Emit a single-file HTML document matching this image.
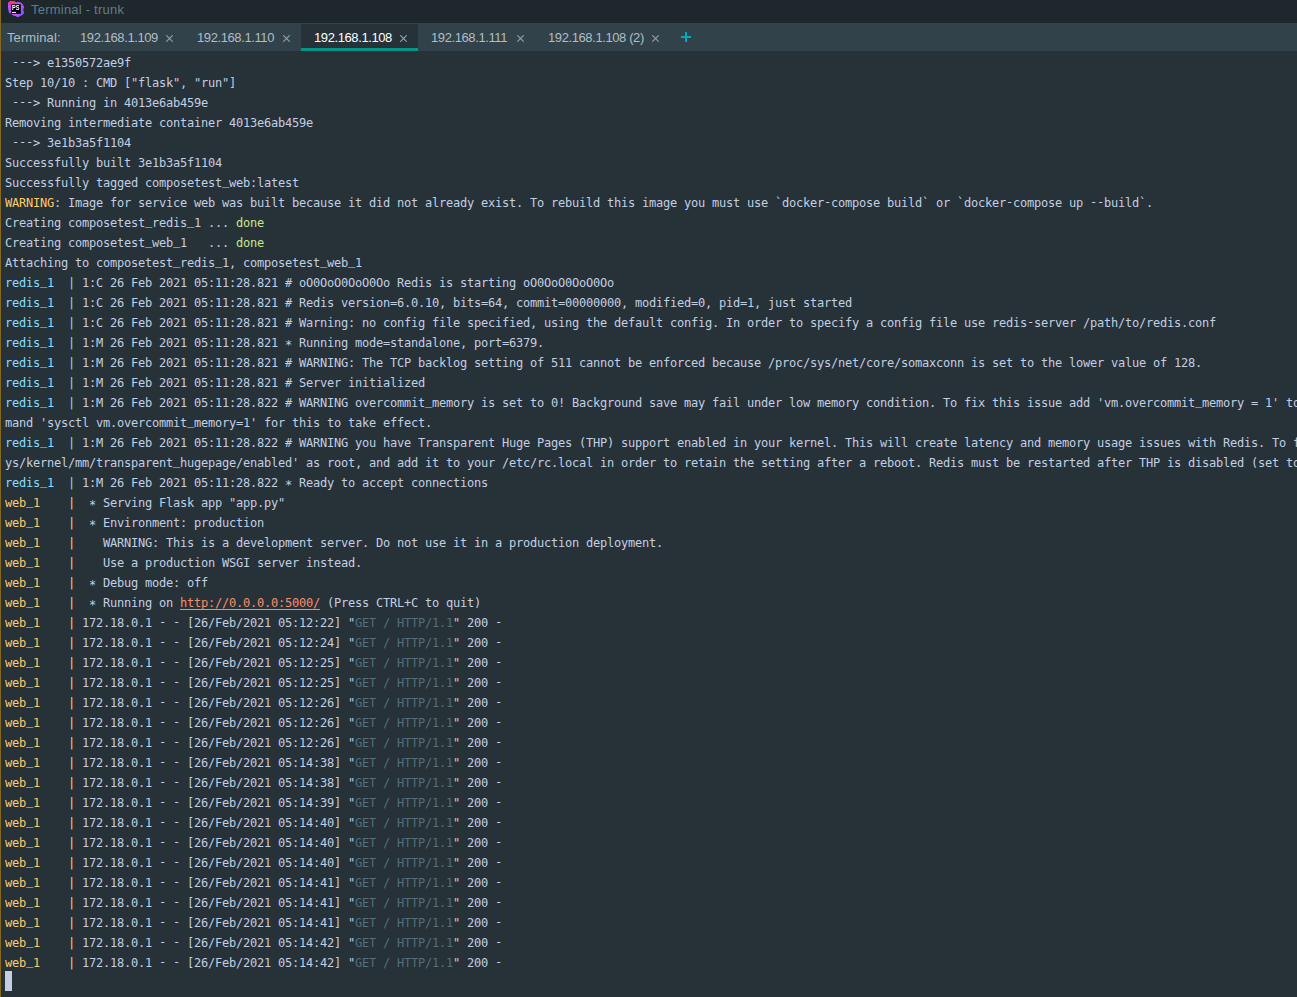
<!DOCTYPE html>
<html><head><meta charset="utf-8"><title>Terminal - trunk</title>
<style>
html,body{margin:0;padding:0;}
body{width:1297px;height:997px;overflow:hidden;background:#263238;position:relative;font-family:"Liberation Sans",sans-serif;}
#edge{position:absolute;left:0;top:0;width:1px;height:997px;background:#86691b;z-index:5;}
#title{position:absolute;left:0;top:0;width:1297px;height:23px;background:#1e272c;}
#title .txt{position:absolute;left:31px;top:2px;font-size:13px;letter-spacing:0.22px;line-height:16px;color:#607d8b;white-space:pre;}
#logo{position:absolute;left:8px;top:1px;width:17px;height:17px;}
#tabs{position:absolute;left:0;top:23px;width:1297px;height:28px;background:#32424a;box-sizing:border-box;border-top:1px solid #32424a;}
#tabs .lbl{position:absolute;left:7px;top:6px;letter-spacing:0.1px;font-size:13px;line-height:16px;color:#b0bec5;}
.tab{position:absolute;top:0;height:27px;box-sizing:border-box;font-size:13px;color:#b0bec5;white-space:pre;}
.tab.act{background:#263238;color:#fff;border-bottom:3px solid #009688;}
.tab .tl{position:absolute;left:13px;top:6px;line-height:16px;letter-spacing:-0.4px;}
.tab .x{position:absolute;right:11px;top:10.5px;width:7px;height:7px;}
#plus{position:absolute;left:681px;top:8px;width:10px;height:10px;}#plus:before{content:"";position:absolute;left:0;top:4px;width:10px;height:2px;background:#0aa5b9;}#plus:after{content:"";position:absolute;left:4px;top:0;width:2px;height:10px;background:#0aa5b9;}
#term{position:absolute;left:5px;top:53px;width:1292px;height:944px;overflow:hidden;font-family:"DejaVu Sans Mono", "Liberation Mono", monospace;font-size:12px;letter-spacing:-0.2247px;color:#c3cee3;}
.ln{height:20px;line-height:20px;white-space:pre;}
.c{color:#89ddff}.y{color:#ffcb6b}.g{color:#c3e88d}.d{color:#546e7a}.l{color:#f78c6c;text-decoration:underline;text-decoration-thickness:1px;text-underline-offset:2px;}.a{position:relative;top:1.5px;}.u{position:relative;top:-2px;}.h{position:relative;top:-1px;}
#cur{position:absolute;left:5px;top:971px;width:7px;height:20px;background:#c3cee3;}
</style></head><body>
<div id="title"><svg id="logo" viewBox="0 0 17 17" style="will-change:transform">
<defs><linearGradient id="lg" x1="0" y1="0" x2="0.25" y2="1"><stop offset="0.1" stop-color="#d44dff"/><stop offset="0.55" stop-color="#a855ff"/><stop offset="0.85" stop-color="#7c5cff"/></linearGradient>
<linearGradient id="lb" x1="0" y1="0" x2="1" y2="0"><stop offset="0" stop-color="#de50ff"/><stop offset="0.55" stop-color="#b554ff"/><stop offset="1" stop-color="#8a5aff" stop-opacity="0"/></linearGradient></defs>
<path d="M0 2L2.2 0L6.8 0.6L8.2 1.6L10 0.9L13 1.4L14.9 3.6L16.1 6.2L15.3 8.6L16.1 12.2L14 14.2L10 16L6.8 14.8L4 13.8L3.6 12.8L1 12L0 7Z" fill="url(#lg)"/>
<path d="M3.6 12.6L13.5 12.6L14 14.2L10 16L6.8 14.8L4 13.8Z" fill="url(#lb)"/>
<path d="M0 2L2.2 0L6.8 0.6L8.2 1.6L8 3.4L3.4 3.4L3.4 4.6L1.6 5Z" fill="#ff318c"/>
<rect x="3.2" y="3.2" width="9.6" height="9.6" fill="#000"/>
<text x="3.9" y="9" font-family="Liberation Sans, sans-serif" font-weight="bold" font-size="7.1" fill="#fff" textLength="7.5" lengthAdjust="spacingAndGlyphs">PS</text>
<rect x="4" y="10.9" width="4" height="1" fill="#fff"/>
</svg><span class="txt">Terminal - trunk</span></div>
<div id="tabs"><span class="lbl">Terminal:</span><div class="tab" style="left:67px;width:117px"><span class="tl">192.168.1.109</span><svg class="x" viewBox="0 0 7 7"><path d="M0.3 0.3L6.7 6.7M6.7 0.3L0.3 6.7" stroke="#90a4ae" stroke-width="1.1" fill="none"/></svg></div><div class="tab" style="left:184px;width:117px"><span class="tl">192.168.1.110</span><svg class="x" viewBox="0 0 7 7"><path d="M0.3 0.3L6.7 6.7M6.7 0.3L0.3 6.7" stroke="#90a4ae" stroke-width="1.1" fill="none"/></svg></div><div class="tab act" style="left:301px;width:117px"><span class="tl">192.168.1.108</span><svg class="x" viewBox="0 0 7 7"><path d="M0.3 0.3L6.7 6.7M6.7 0.3L0.3 6.7" stroke="#90a4ae" stroke-width="1.1" fill="none"/></svg></div><div class="tab" style="left:418px;width:117px"><span class="tl">192.168.1.111</span><svg class="x" viewBox="0 0 7 7"><path d="M0.3 0.3L6.7 6.7M6.7 0.3L0.3 6.7" stroke="#90a4ae" stroke-width="1.1" fill="none"/></svg></div><div class="tab" style="left:535px;width:135px"><span class="tl">192.168.1.108 (2)</span><svg class="x" viewBox="0 0 7 7"><path d="M0.3 0.3L6.7 6.7M6.7 0.3L0.3 6.7" stroke="#90a4ae" stroke-width="1.1" fill="none"/></svg></div><div id="plus"></div></div>
<div id="term">
<div class="ln"> <span class="h">-</span><span class="h">-</span><span class="h">-</span>&gt; e1350572ae9f</div>
<div class="ln">Step 10/10 : CMD ["flask", "run"]</div>
<div class="ln"> <span class="h">-</span><span class="h">-</span><span class="h">-</span>&gt; Running in 4013e6ab459e</div>
<div class="ln">Removing intermediate container 4013e6ab459e</div>
<div class="ln"> <span class="h">-</span><span class="h">-</span><span class="h">-</span>&gt; 3e1b3a5f1104</div>
<div class="ln">Successfully built 3e1b3a5f1104</div>
<div class="ln">Successfully tagged composetest<span class="u">_</span>web:latest</div>
<div class="ln"><span class="y">WARNING</span>: Image for service web was built because it did not already exist. To rebuild this image you must use `docker<span class="h">-</span>compose build` or `docker<span class="h">-</span>compose up <span class="h">-</span><span class="h">-</span>build`.</div>
<div class="ln">Creating composetest<span class="u">_</span>redis<span class="u">_</span>1 ... <span class="g">done</span></div>
<div class="ln">Creating composetest<span class="u">_</span>web<span class="u">_</span>1   ... <span class="g">done</span></div>
<div class="ln">Attaching to composetest<span class="u">_</span>redis<span class="u">_</span>1, composetest<span class="u">_</span>web<span class="u">_</span>1</div>
<div class="ln"><span class="c">redis<span class="u">_</span>1  |</span> 1:C 26 Feb 2021 05:11:28.821 # oO0OoO0OoO0Oo Redis is starting oO0OoO0OoO0Oo</div>
<div class="ln"><span class="c">redis<span class="u">_</span>1  |</span> 1:C 26 Feb 2021 05:11:28.821 # Redis version=6.0.10, bits=64, commit=00000000, modified=0, pid=1, just started</div>
<div class="ln"><span class="c">redis<span class="u">_</span>1  |</span> 1:C 26 Feb 2021 05:11:28.821 # Warning: no config file specified, using the default config. In order to specify a config file use redis<span class="h">-</span>server /path/to/redis.conf</div>
<div class="ln"><span class="c">redis<span class="u">_</span>1  |</span> 1:M 26 Feb 2021 05:11:28.821 <span class="a">*</span> Running mode=standalone, port=6379.</div>
<div class="ln"><span class="c">redis<span class="u">_</span>1  |</span> 1:M 26 Feb 2021 05:11:28.821 # WARNING: The TCP backlog setting of 511 cannot be enforced because /proc/sys/net/core/somaxconn is set to the lower value of 128.</div>
<div class="ln"><span class="c">redis<span class="u">_</span>1  |</span> 1:M 26 Feb 2021 05:11:28.821 # Server initialized</div>
<div class="ln"><span class="c">redis<span class="u">_</span>1  |</span> 1:M 26 Feb 2021 05:11:28.822 # WARNING overcommit<span class="u">_</span>memory is set to 0! Background save may fail under low memory condition. To fix this issue add 'vm.overcommit<span class="u">_</span>memory = 1' to /etc/sysctl.conf and then reboot or run the com</div>
<div class="ln">mand 'sysctl vm.overcommit<span class="u">_</span>memory=1' for this to take effect.</div>
<div class="ln"><span class="c">redis<span class="u">_</span>1  |</span> 1:M 26 Feb 2021 05:11:28.822 # WARNING you have Transparent Huge Pages (THP) support enabled in your kernel. This will create latency and memory usage issues with Redis. To fix this issue run the command 'echo never &gt; /s</div>
<div class="ln">ys/kernel/mm/transparent<span class="u">_</span>hugepage/enabled' as root, and add it to your /etc/rc.local in order to retain the setting after a reboot. Redis must be restarted after THP is disabled (set to 'madvise' or 'never').</div>
<div class="ln"><span class="c">redis<span class="u">_</span>1  |</span> 1:M 26 Feb 2021 05:11:28.822 <span class="a">*</span> Ready to accept connections</div>
<div class="ln"><span class="y">web<span class="u">_</span>1    |</span>  <span class="a">*</span> Serving Flask app "app.py"</div>
<div class="ln"><span class="y">web<span class="u">_</span>1    |</span>  <span class="a">*</span> Environment: production</div>
<div class="ln"><span class="y">web<span class="u">_</span>1    |</span>    WARNING: This is a development server. Do not use it in a production deployment.</div>
<div class="ln"><span class="y">web<span class="u">_</span>1    |</span>    Use a production WSGI server instead.</div>
<div class="ln"><span class="y">web<span class="u">_</span>1    |</span>  <span class="a">*</span> Debug mode: off</div>
<div class="ln"><span class="y">web<span class="u">_</span>1    |</span>  <span class="a">*</span> Running on <span class="l">http://0.0.0.0:5000/</span> (Press CTRL+C to quit)</div>
<div class="ln"><span class="y">web<span class="u">_</span>1    |</span> 172.18.0.1 <span class="h">-</span> <span class="h">-</span> [26/Feb/2021 05:12:22] "<span class="d">GET / HTTP/1.1</span>" 200 <span class="h">-</span></div>
<div class="ln"><span class="y">web<span class="u">_</span>1    |</span> 172.18.0.1 <span class="h">-</span> <span class="h">-</span> [26/Feb/2021 05:12:24] "<span class="d">GET / HTTP/1.1</span>" 200 <span class="h">-</span></div>
<div class="ln"><span class="y">web<span class="u">_</span>1    |</span> 172.18.0.1 <span class="h">-</span> <span class="h">-</span> [26/Feb/2021 05:12:25] "<span class="d">GET / HTTP/1.1</span>" 200 <span class="h">-</span></div>
<div class="ln"><span class="y">web<span class="u">_</span>1    |</span> 172.18.0.1 <span class="h">-</span> <span class="h">-</span> [26/Feb/2021 05:12:25] "<span class="d">GET / HTTP/1.1</span>" 200 <span class="h">-</span></div>
<div class="ln"><span class="y">web<span class="u">_</span>1    |</span> 172.18.0.1 <span class="h">-</span> <span class="h">-</span> [26/Feb/2021 05:12:26] "<span class="d">GET / HTTP/1.1</span>" 200 <span class="h">-</span></div>
<div class="ln"><span class="y">web<span class="u">_</span>1    |</span> 172.18.0.1 <span class="h">-</span> <span class="h">-</span> [26/Feb/2021 05:12:26] "<span class="d">GET / HTTP/1.1</span>" 200 <span class="h">-</span></div>
<div class="ln"><span class="y">web<span class="u">_</span>1    |</span> 172.18.0.1 <span class="h">-</span> <span class="h">-</span> [26/Feb/2021 05:12:26] "<span class="d">GET / HTTP/1.1</span>" 200 <span class="h">-</span></div>
<div class="ln"><span class="y">web<span class="u">_</span>1    |</span> 172.18.0.1 <span class="h">-</span> <span class="h">-</span> [26/Feb/2021 05:14:38] "<span class="d">GET / HTTP/1.1</span>" 200 <span class="h">-</span></div>
<div class="ln"><span class="y">web<span class="u">_</span>1    |</span> 172.18.0.1 <span class="h">-</span> <span class="h">-</span> [26/Feb/2021 05:14:38] "<span class="d">GET / HTTP/1.1</span>" 200 <span class="h">-</span></div>
<div class="ln"><span class="y">web<span class="u">_</span>1    |</span> 172.18.0.1 <span class="h">-</span> <span class="h">-</span> [26/Feb/2021 05:14:39] "<span class="d">GET / HTTP/1.1</span>" 200 <span class="h">-</span></div>
<div class="ln"><span class="y">web<span class="u">_</span>1    |</span> 172.18.0.1 <span class="h">-</span> <span class="h">-</span> [26/Feb/2021 05:14:40] "<span class="d">GET / HTTP/1.1</span>" 200 <span class="h">-</span></div>
<div class="ln"><span class="y">web<span class="u">_</span>1    |</span> 172.18.0.1 <span class="h">-</span> <span class="h">-</span> [26/Feb/2021 05:14:40] "<span class="d">GET / HTTP/1.1</span>" 200 <span class="h">-</span></div>
<div class="ln"><span class="y">web<span class="u">_</span>1    |</span> 172.18.0.1 <span class="h">-</span> <span class="h">-</span> [26/Feb/2021 05:14:40] "<span class="d">GET / HTTP/1.1</span>" 200 <span class="h">-</span></div>
<div class="ln"><span class="y">web<span class="u">_</span>1    |</span> 172.18.0.1 <span class="h">-</span> <span class="h">-</span> [26/Feb/2021 05:14:41] "<span class="d">GET / HTTP/1.1</span>" 200 <span class="h">-</span></div>
<div class="ln"><span class="y">web<span class="u">_</span>1    |</span> 172.18.0.1 <span class="h">-</span> <span class="h">-</span> [26/Feb/2021 05:14:41] "<span class="d">GET / HTTP/1.1</span>" 200 <span class="h">-</span></div>
<div class="ln"><span class="y">web<span class="u">_</span>1    |</span> 172.18.0.1 <span class="h">-</span> <span class="h">-</span> [26/Feb/2021 05:14:41] "<span class="d">GET / HTTP/1.1</span>" 200 <span class="h">-</span></div>
<div class="ln"><span class="y">web<span class="u">_</span>1    |</span> 172.18.0.1 <span class="h">-</span> <span class="h">-</span> [26/Feb/2021 05:14:42] "<span class="d">GET / HTTP/1.1</span>" 200 <span class="h">-</span></div>
<div class="ln"><span class="y">web<span class="u">_</span>1    |</span> 172.18.0.1 <span class="h">-</span> <span class="h">-</span> [26/Feb/2021 05:14:42] "<span class="d">GET / HTTP/1.1</span>" 200 <span class="h">-</span></div>
</div>
<div id="cur"></div>
<div id="edge"></div>
</body></html>
